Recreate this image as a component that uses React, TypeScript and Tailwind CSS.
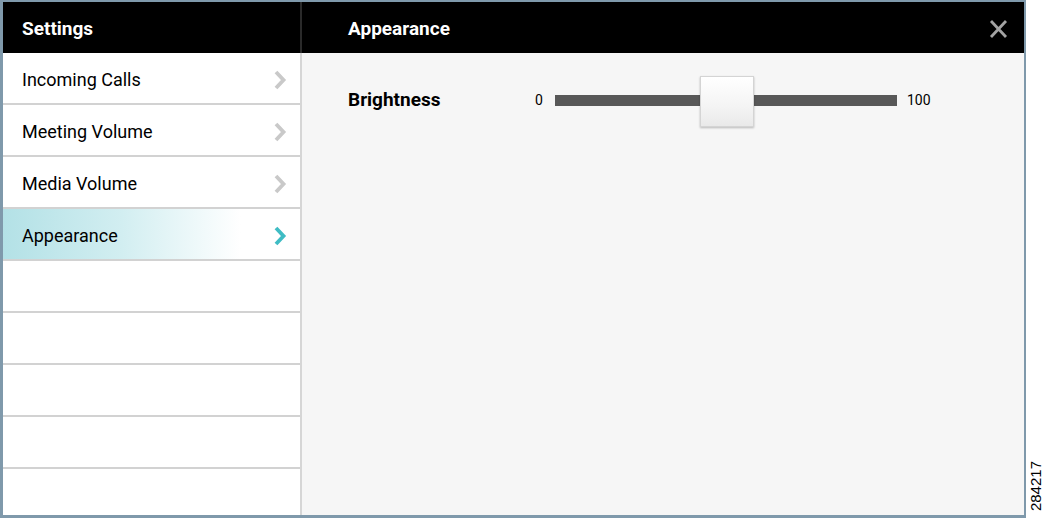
import React from "react";

const items = ["Incoming Calls", "Meeting Volume", "Media Volume", "Appearance"];

const Chevron: React.FC<{ active?: boolean }> = ({ active }) => (
  <svg width="14" height="20" viewBox="0 0 14 20" className="block">
    <path
      d="M3 2 L10.5 10 L3 18"
      fill="none"
      stroke={active ? "#3fbcc4" : "#c9c9c9"}
      strokeWidth="3.8"
      strokeLinejoin="miter"
    />
  </svg>
);

const App: React.FC = () => {
  return (
    <div className="w-[1045px] h-[518px] bg-white flex font-['Roboto',sans-serif]">
      {/* Frame */}
      <div className="w-[1026px] h-[518px] border-l-[3px] border-t-2 border-r-2 border-b-[3px] border-[#7f99ab] flex flex-col">
        {/* Header */}
        <div className="h-[51px] bg-black flex items-center text-white font-bold text-[19px]">
          <div className="w-[299px] pl-[19px] pt-[3px] border-r-2 border-[#2a2a2a] h-full flex items-center">Settings</div>
          <div className="flex-1 pl-[46px] pt-[3px] flex items-center justify-between pr-[16px]">
            <span>Appearance</span>
            <svg width="19" height="18" viewBox="0 0 19 18">
              <path d="M2 1 L17 17 M17 1 L2 17" stroke="#a3a3a3" strokeWidth="2.8" />
            </svg>
          </div>
        </div>
        <div className="flex flex-1 min-h-0">
          {/* Sidebar */}
          <div className="w-[299px] bg-white border-r-2 border-[#d6d6d6] flex flex-col">
            {Array.from({ length: 9 }).map((_, i) => {
              const label = items[i];
              const active = i === 3;
              return (
                <div
                  key={i}
                  className={`h-[52px] shrink-0 flex items-center justify-between pl-[19px] pr-[13px] pt-[3px] border-b-2 border-[#d2d2d2] text-[18px] text-black ${
                    active ? "bg-[linear-gradient(90deg,#b3e1e6_0%,#d2eef1_40%,#ffffff_80%)]" : ""
                  } ${i === 8 ? "border-b-0" : ""}`}
                >
                  <span>{label}</span>
                  {label && <Chevron active={active} />}
                </div>
              );
            })}
          </div>
          {/* Content */}
          <div className="flex-1 bg-[#f6f6f6] pt-[21px] pl-[46px]">
            <div className="flex items-center h-[52px]">
              <span className="w-[187px] font-bold text-[19px] text-black">Brightness</span>
              <span className="text-[14px] text-black w-[20px]">0</span>
              <div className="relative w-[342px] h-[11px] bg-[#585858]">
                <div className="absolute left-[145px] top-[-19px] w-[54px] h-[51px] bg-[linear-gradient(180deg,#ffffff_0%,#f4f4f4_60%,#e9e9e9_100%)] border border-[#d4d4d4] shadow-[0_1px_2px_rgba(0,0,0,0.25)]" />
              </div>
              <span className="text-[14px] text-black ml-[10px]">100</span>
            </div>
          </div>
        </div>
      </div>
      <div className="flex-1 flex flex-col justify-end items-center pb-[7px]">
        <span className="[writing-mode:vertical-rl] rotate-180 text-[15px] leading-none font-['Liberation_Sans',sans-serif] text-black whitespace-nowrap">
          284217
        </span>
      </div>
    </div>
  );
};

export default App;
